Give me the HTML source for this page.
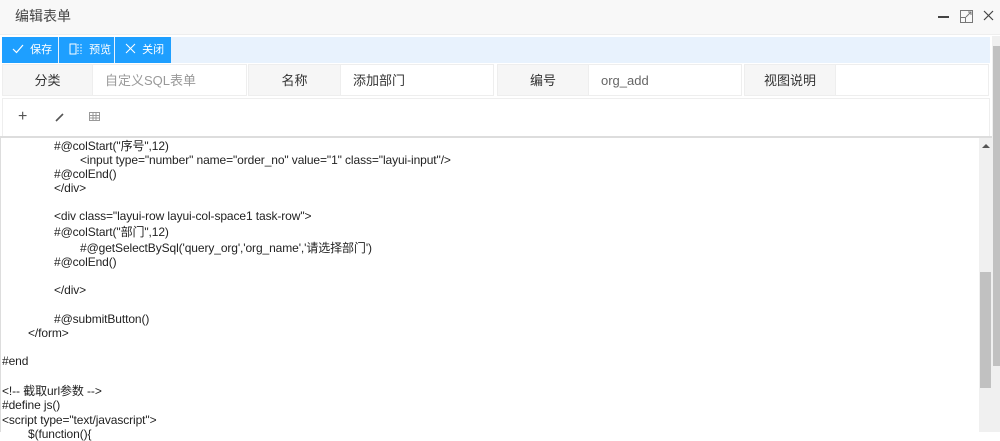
<!DOCTYPE html>
<html><head><meta charset="utf-8"><style>
*{margin:0;padding:0;box-sizing:border-box}
body{width:1000px;height:432px;overflow:hidden;background:#fff;font-family:"Liberation Sans","Noto Sans CJK SC",sans-serif;position:relative}
.a{position:absolute}
.title{left:0;top:0;width:1000px;height:35px;background:#f8f8f8;border-bottom:1px solid #eee}
.tb{left:2px;top:37px;width:988px;height:26px;background:#e8f2fd}
.btn{top:37px;height:26px;background:#1e9fff;color:#fff;font-size:11px;line-height:26px;padding-left:10px}
.cell{top:64px;height:32px;border:1px solid #eee;font-size:13px;line-height:31px}
.lab{background:#f6f6f6;color:#333;text-align:center}
.val{background:#fff;color:#999;padding-left:12px}
.code{font-size:12px;color:#222;white-space:pre;line-height:14px;letter-spacing:-0.1px}
</style></head><body>
<div class="a title"></div>
<div class="a" style="left:15px;top:6px;font-size:14px;color:#444">编辑表单</div>
<div class="a" style="left:938px;top:16px;width:11px;height:1.5px;background:#444"></div>
<svg class="a" style="left:960px;top:10px" width="13" height="13" viewBox="0 0 13 13"><rect x="0.5" y="0.5" width="12" height="12" fill="none" stroke="#777"/><rect x="0.5" y="7.5" width="5" height="5" fill="none" stroke="#777"/><path d="M6 7L11 2M8 2h3v3" stroke="#777" fill="none"/></svg>
<svg class="a" style="left:983px;top:10px" width="11" height="11"><path d="M1 1L10 10M10 1L1 10" stroke="#444" stroke-width="1.2"/></svg>
<div class="a tb"></div>
<div class="a btn" style="left:2px;width:56px"><svg width="12" height="10" style="vertical-align:-1px"><path d="M1 5L4.5 8.5L11 1" stroke="#fff" fill="none" stroke-width="1.2"/></svg>&nbsp; 保存</div>
<div class="a btn" style="left:59px;width:55px"><svg width="14" height="12" style="vertical-align:-2px"><rect x="1" y="1" width="6" height="10" fill="none" stroke="#fff"/><path d="M9 1v10M12 1v10" stroke="#fff" stroke-dasharray="1.5 1.5"/></svg>&nbsp; 预览</div>
<div class="a btn" style="left:115px;width:56px"><svg width="11" height="11" style="vertical-align:-1px"><path d="M1 1L10 10M10 1L1 10" stroke="#fff" stroke-width="1"/></svg>&nbsp; 关闭</div>
<div class="a cell lab" style="left:2px;width:91px">分类</div>
<div class="a cell val" style="left:92px;width:155px">自定义SQL表单</div>
<div class="a cell lab" style="left:248px;width:93px">名称</div>
<div class="a cell val" style="left:340px;width:154px;color:#333">添加部门</div>
<div class="a cell lab" style="left:497px;width:92px">编号</div>
<div class="a cell val" style="left:588px;width:154px;color:#666">org_add</div>
<div class="a cell lab" style="left:744px;width:92px">视图说明</div>
<div class="a cell val" style="left:835px;width:154px"></div>
<div class="a" style="left:2px;top:98px;width:988px;height:38px;border:1px solid #eee;border-bottom:none"></div>
<div class="a" style="left:18px;top:108px;font-size:16px;color:#555">+</div>
<svg class="a" style="left:55px;top:113px" width="9" height="9"><path d="M1 8L8 1" stroke="#555" stroke-width="1.6"/></svg>
<svg class="a" style="left:89px;top:112px" width="11" height="9"><rect x="0.5" y="0.5" width="10" height="8" fill="none" stroke="#999"/><path d="M0 3.5h11M0 6h11M4 0v9M7 0v9" stroke="#999"/></svg>
<div class="a" style="left:0;top:136px;width:992px;height:296px;border-top:2px solid #ddd;border-left:1px solid #ddd;border-right:1px solid #ddd"></div>
<div class="a" style="left:979px;top:138px;width:13px;height:294px;background:#f0f0f0"></div>
<div class="a" style="left:980px;top:272px;width:11px;height:116px;background:#c1c1c1"></div>
<div class="a" style="left:982px;top:144px;width:0;height:0;border-left:4px solid transparent;border-right:4px solid transparent;border-bottom:4px solid #555"></div>
<div class="a" style="left:992px;top:36px;width:8px;height:396px;background:#f0f0f0"></div>
<div class="a" style="left:993px;top:46px;width:7px;height:320px;background:#c1c1c1"></div>
<div class="a code" style="left:54px;top:139px">#@colStart("序号",12)</div>
<div class="a code" style="left:80px;top:153px">&lt;input type="number" name="order_no" value="1" class="layui-input"/&gt;</div>
<div class="a code" style="left:54px;top:167px">#@colEnd()</div>
<div class="a code" style="left:54px;top:181px">&lt;/div&gt;</div>
<div class="a code" style="left:54px;top:209px">&lt;div class="layui-row layui-col-space1 task-row"&gt;</div>
<div class="a code" style="left:54px;top:225px">#@colStart("部门",12)</div>
<div class="a code" style="left:80px;top:241px">#@getSelectBySql('query_org','org_name','请选择部门')</div>
<div class="a code" style="left:54px;top:255px">#@colEnd()</div>
<div class="a code" style="left:54px;top:283px">&lt;/div&gt;</div>
<div class="a code" style="left:54px;top:312px">#@submitButton()</div>
<div class="a code" style="left:28px;top:326px">&lt;/form&gt;</div>
<div class="a code" style="left:2px;top:354px">#end</div>
<div class="a code" style="left:2px;top:384px">&lt;!-- 截取url参数 --&gt;</div>
<div class="a code" style="left:2px;top:398px">#define js()</div>
<div class="a code" style="left:2px;top:413px">&lt;script type="text/javascript"&gt;</div>
<div class="a code" style="left:28px;top:427px">$(function(){</div>
</body></html>
